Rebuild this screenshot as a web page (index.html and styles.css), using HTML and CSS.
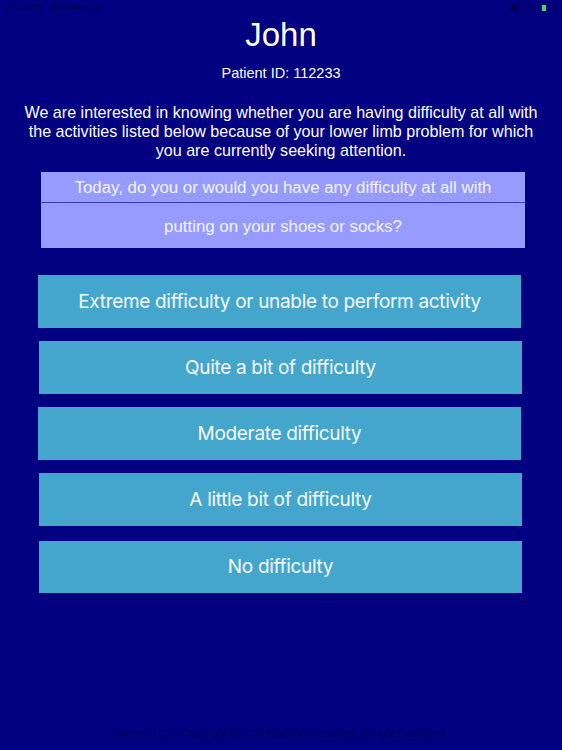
FILE: index.html
```html
<!DOCTYPE html>
<html lang="en">
<head>
<meta charset="utf-8">
<title>Patient questionnaire</title>
<link rel="stylesheet" href="styles.css">
</head>
<body>
<div class="screen">
  <div class="status">
    <span>11:14 PM&nbsp;&nbsp;&nbsp;Mon May 11</span>
    <span class="status-right">
      <svg class="wifi" viewBox="0 0 16 12" width="10" height="8"><path d="M8 12 0 3.5C4.5-.8 11.500-.8 16 3.500Z" fill="#000048"/></svg>
      <span>24%</span>
      <span class="battery"><span class="battery-fill"></span></span>
    </span>
  </div>
  <h1 class="name">John</h1>
  <p class="pid">Patient ID: 112233</p>
  <p class="intro">We are interested in knowing whether you are having difficulty at all with the activities listed below because of your lower limb problem for which you are currently seeking attention.</p>
  <div class="question">
    <div class="q-head">Today, do you or would you have any difficulty at all with</div>
    <div class="q-body">putting on your shoes or socks?</div>
  </div>
  <div class="answers">
    <button class="answer a-1">Extreme difficulty or unable to perform activity</button>
    <button class="answer a-2">Quite a bit of difficulty</button>
    <button class="answer a-3">Moderate difficulty</button>
    <button class="answer a-4">A little bit of difficulty</button>
    <button class="answer a-5">No difficulty</button>
  </div>
  <div class="footer">version 1.72 - Copyright © 2020 NWSDevelopment. All rights reserved.</div>
</div>
</body>
</html>
```
FILE: styles.css
```css
* { box-sizing: border-box; }
html, body { margin: 0; padding: 0; }
body { background: #000080; font-family: "Liberation Sans", Arial, sans-serif; color: #fff; }
.screen { width: 562px; height: 750px; display: flex; flex-direction: column; align-items: stretch; overflow: hidden; }
.status { height: 14px; padding: 1px 5px 0 5px; display: flex; justify-content: space-between; font-size: 9px; line-height: 12px; color: #000048; }
.status-right { display: flex; align-items: center; gap: 2px; }
.battery { width: 16px; height: 8px; border: 1px solid #000060; border-radius: 2px; display: block; }
.battery-fill { display: block; width: 4px; height: 100%; background: #4cd964; }
.name { margin: 0; text-align: center; font-size: 33px; font-weight: 400; line-height: 42px; }
.pid { margin: 8px 0 0; text-align: center; font-size: 14.500px; line-height: 18px; }
.intro { margin: 21px 20px 0; text-align: center; font-size: 16.100px; line-height: 19px; }
.question { margin: 12px 37px 0 41px; background: #979bff; text-align: center; font-size: 16.850px; color: #f2f4ff; }
.q-head { height: 31px; line-height: 31px; border-bottom: 1px solid #3d3db8; }
.q-body { height: 45px; line-height: 47px; }
.answers { margin-top: 27px; display: flex; flex-direction: column; gap: 13.500px; }
.answer { width: 483px; height: 52.500px; border: 0; background: #44a6cc; color: #f6fbff; font-family: Inter, "Liberation Sans", sans-serif; font-size: 19px; letter-spacing: -0.320px; text-align: center; padding: 0; }
.a-1, .a-3 { margin-left: 38px; }
.a-2, .a-4, .a-5 { margin-left: 39px; }
.a-5 { margin-top: 1.500px; }
.footer { margin-top: auto; height: 26px; text-align: center; font-size: 10.600px; line-height: 18px; color: #000058; }
```
